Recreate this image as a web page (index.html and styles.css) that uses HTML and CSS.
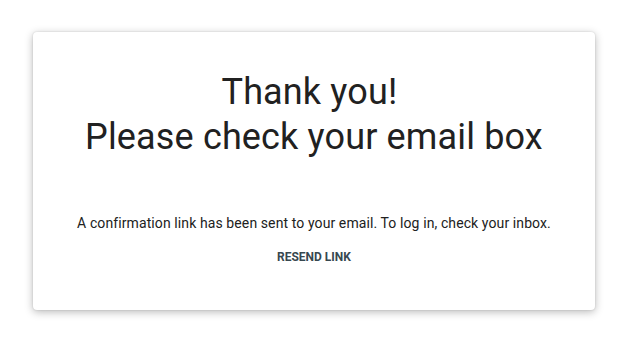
FILE: index.html
```html
<!DOCTYPE html>
<html>
<head>
<meta charset="utf-8">
<link rel="stylesheet" href="styles.css">
</head>
<body>
<div class="page">
  <div class="card">
    <h1 class="title">Thank you!&nbsp;<br>Please check your email box</h1>
    <p class="message">A confirmation link has been sent to your email. To log in, check your inbox.</p>
    <a class="resend" href="#">RESEND LINK</a>
  </div>
</div>
</body>
</html>
```
FILE: styles.css
```css
html, body {
  margin: 0;
  padding: 0;
  background: #ffffff;
  font-family: Roboto, "Noto Sans", sans-serif;
}
.page {
  padding: 32px 35px 36px 33px;
}
.card {
  height: 278px;
  box-sizing: border-box;
  background: #fff;
  border-radius: 4px;
  box-shadow: 0 2px 8px rgba(0,0,0,0.28), 0 0 2px rgba(0,0,0,0.14);
  display: flex;
  flex-direction: column;
  align-items: center;
  padding-top: 38px;
}
.title {
  margin: 0;
  font-size: 36px;
  font-weight: 400;
  line-height: 45px;
  letter-spacing: 0.15px;
  color: #212121;
  text-align: center;
}
.message {
  margin: 53px 0 0;
  font-size: 14px;
  line-height: 20px;
  letter-spacing: 0.1px;
  color: #212121;
}
.resend {
  margin-top: 17px;
  font-size: 12px;
  font-weight: 700;
  color: #37474f;
  text-decoration: none;
}
```
